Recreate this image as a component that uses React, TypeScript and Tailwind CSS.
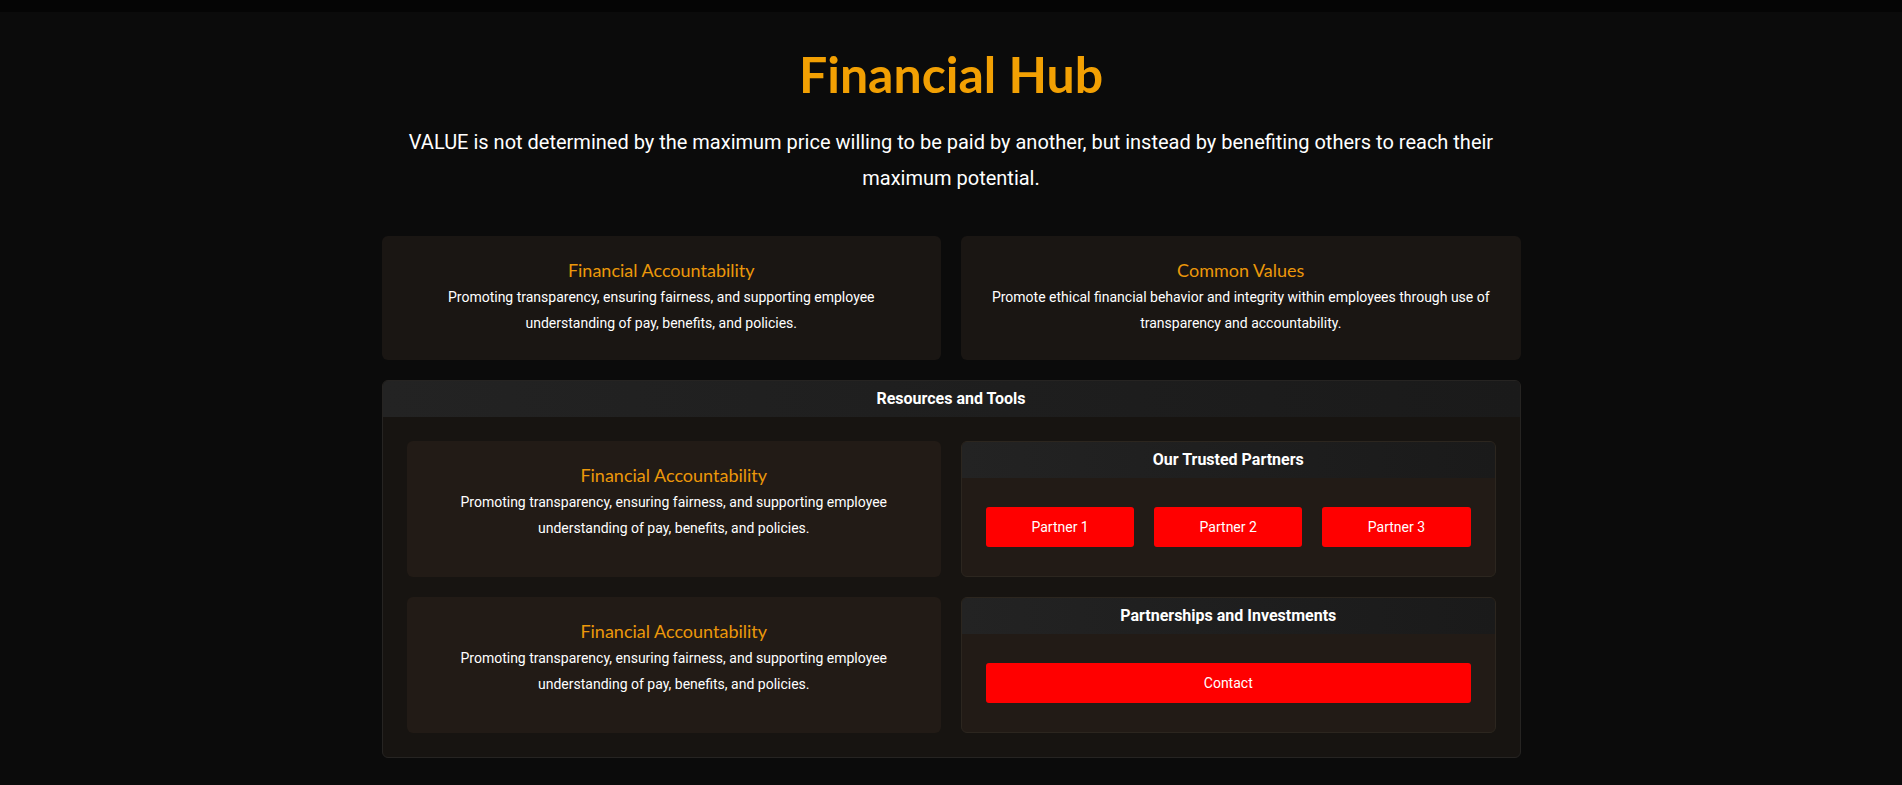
import React from "react";

const serif = "font-['Lato','Noto_Sans',sans-serif]";

export default function App() {
    return (
        <div className="min-h-screen bg-[#0b0b0b] font-['Roboto','Noto_Sans',sans-serif] text-white">
            <div className="h-3 bg-[#050505]" />
            <div className="w-[1139px] mx-auto pb-10">
                <h1 className={`${serif} text-center text-[50px] font-bold leading-[60px] text-[#f2a003] pt-[32px]`}>
                    Financial Hub
                </h1>
                <p className="mt-[20px] text-center text-[20px] leading-9 px-6">
                    VALUE is not determined by the maximum price willing to be paid by another, but instead by benefiting others to reach their maximum potential.
                </p>

                <div className="mt-10 grid grid-cols-2 gap-5">
                    <InfoCard
                        title="Financial Accountability"
                        text="Promoting transparency, ensuring fairness, and supporting employee understanding of pay, benefits, and policies."
                        className="bg-[#1a1613] pb-6"
                    />
                    <InfoCard
                        title="Common Values"
                        text="Promote ethical financial behavior and integrity within employees through use of transparency and accountability."
                        className="bg-[#1a1613] pb-6"
                    />
                </div>

                <div className="mt-5 rounded-md border border-[#262422] bg-[#171411] overflow-hidden">
                    <PanelHeader title="Resources and Tools" />
                    <div className="grid grid-cols-2 gap-5 p-6">
                        <InfoCard
                            title="Financial Accountability"
                            text="Promoting transparency, ensuring fairness, and supporting employee understanding of pay, benefits, and policies."
                            className="bg-[#221b16]"
                        />
                        <div className="rounded-md border border-[#2c261f] bg-[#221b16] overflow-hidden">
                            <PanelHeader title="Our Trusted Partners" />
                            <div className="grid grid-cols-3 gap-5 px-6 py-[29px]">
                                <RedButton label="Partner 1" />
                                <RedButton label="Partner 2" />
                                <RedButton label="Partner 3" />
                            </div>
                        </div>
                        <InfoCard
                            title="Financial Accountability"
                            text="Promoting transparency, ensuring fairness, and supporting employee understanding of pay, benefits, and policies."
                            className="bg-[#221b16]"
                        />
                        <div className="rounded-md border border-[#2c261f] bg-[#221b16] overflow-hidden">
                            <PanelHeader title="Partnerships and Investments" />
                            <div className="px-6 py-[29px]">
                                <RedButton label="Contact" />
                            </div>
                        </div>
                    </div>
                </div>
            </div>
        </div>
    );
}

function PanelHeader({ title }: { title: string }) {
    return (
        <div className="h-9 flex items-center justify-center bg-gradient-to-r from-[#232323] to-[#1a1a1a] text-[16px] font-bold text-white">
            {title}
        </div>
    );
}

function InfoCard({ title, text, className }: { title: string, text: string, className: string }) {
    return (
        <div className={`rounded-md px-6 pt-5 text-center ${className}`}>
            <h3 className={`${serif} text-[18px] leading-7 text-[#ec980a]`}>{title}</h3>
            <p className="text-[14px] leading-[26px] text-white">{text}</p>
        </div>
    );
}

function RedButton({ label }: { label: string }) {
    return (
        <button className="h-10 w-full rounded-[3px] bg-[#ff0000] text-[14px] text-white">
            {label}
        </button>
    );
}
